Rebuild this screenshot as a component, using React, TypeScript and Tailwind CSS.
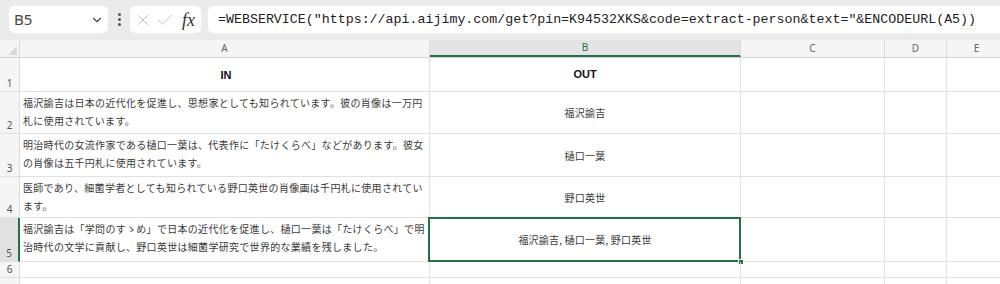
import React from "react";
import { ChevronDown, X, Check } from "lucide-react";

const jp = { fontFamily: '"Noto Sans CJK JP", "Noto Sans", sans-serif' };
const ui = { fontFamily: '"Noto Sans", "Liberation Sans", sans-serif' };

const rows: { h: number; a: string[]; b: string; bold?: boolean; label?: boolean }[] = [
  { h: 34, a: [], b: "OUT", bold: true },
  {
    h: 42,
    a: [
      "福沢諭吉は日本の近代化を促進し、思想家としても知られています。彼の肖像は一万円",
      "札に使用されています。",
    ],
    b: "福沢諭吉",
  },
  {
    h: 43,
    a: [
      "明治時代の女流作家である樋口一葉は、代表作に「たけくらべ」などがあります。彼女",
      "の肖像は五千円札に使用されています。",
    ],
    b: "樋口一葉",
  },
  {
    h: 41,
    a: [
      "医師であり、細菌学者としても知られている野口英世の肖像画は千円札に使用されてい",
      "ます。",
    ],
    b: "野口英世",
  },
  {
    h: 44,
    a: [
      "福沢諭吉は「学問のすゝめ」で日本の近代化を促進し、樋口一葉は「たけくらべ」で明",
      "治時代の文学に貢献し、野口英世は細菌学研究で世界的な業績を残しました。",
    ],
    b: "福沢諭吉, 樋口一葉, 野口英世",
  },
  { h: 16, a: [], b: "" },
  { h: 20, a: [], b: "", label: false },
];

const cols = "grid grid-cols-[20px_410px_311px_144px_62px_1fr]";

export default function App() {
  return (
    <div className="w-[1000px] h-[284px] overflow-hidden bg-white" style={ui}>
      {/* toolbar */}
      <div className="h-[40px] bg-[#ebebeb] flex items-start pt-[6px] pl-[9px] gap-0">
        <div className="w-[99px] h-[27px] bg-white rounded-[5px] flex items-center justify-between pl-[5px] pr-[4px]">
          <span className="text-[15px] text-[#444]">B5</span>
          <ChevronDown className="w-[14px] h-[14px] text-[#444]" strokeWidth={2} />
        </div>
        <div className="w-[22px] h-[27px] flex flex-col items-center justify-center gap-[2px]">
          <span className="w-[3px] h-[3px] rounded-full bg-[#555]" />
          <span className="w-[3px] h-[3px] rounded-full bg-[#555]" />
          <span className="w-[3px] h-[3px] rounded-full bg-[#555]" />
        </div>
        <div className="w-[71px] h-[27px] bg-white rounded-[5px] flex items-center pl-[3px] gap-[2px]">
          <X className="w-[20px] h-[20px] text-[#c2c2c2]" strokeWidth={1.1} />
          <Check className="w-[20px] h-[20px] text-[#c2c2c2]" strokeWidth={1.1} />
          <span
            className="text-[18px] italic text-[#333] ml-[5px] leading-none"
            style={{ fontFamily: '"Liberation Serif", serif' }}
          >
            fx
          </span>
        </div>
        <div className="ml-[7px] flex-1 h-[27px] bg-white rounded-l-[5px] flex items-center pl-[10px]">
          <span
            className="text-[13.3px] text-[#222] whitespace-nowrap"
            style={{ fontFamily: '"Liberation Mono", monospace' }}
          >
            =WEBSERVICE("https://api.aijimy.com/get?pin=K94532XKS&amp;code=extract-person&amp;text="&amp;ENCODEURL(A5))
          </span>
        </div>
      </div>

      {/* column headers */}
      <div className={`${cols} h-[18px] bg-[#f5f5f5] border-b border-[#d4d4d4] text-[10px] text-[#666]`}>
        <div className="relative border-r border-[#dcdcdc]">
          <svg className="absolute right-[2px] bottom-[2px]" width="9" height="9" viewBox="0 0 9 9">
            <polygon points="9,0 9,9 0,9" fill="#d8d8d8" />
          </svg>
        </div>
        <div className="flex items-center justify-center border-r border-[#dcdcdc]">A</div>
        <div className="flex items-center justify-center bg-[#e4e4e4] border-b-2 border-[#217346] text-[#217346] border-r border-r-[#dcdcdc]">
          B
        </div>
        <div className="flex items-center justify-center border-r border-[#dcdcdc]">C</div>
        <div className="flex items-center justify-center border-r border-[#dcdcdc]">D</div>
        <div className="flex items-center justify-center pl-[6px]">E</div>
      </div>

      {/* rows */}
      {rows.map((r, i) => {
        const selected = i === 4;
        return (
          <div key={i} className={cols} style={{ height: r.h }}>
            <div
              className={`flex items-end justify-center pb-[2px] text-[10px] leading-[12px] text-[#555] border-b border-[#e1e1e1] ${
                selected ? "bg-[#e1e1e1] border-r-2 border-r-[#217346]" : "bg-[#f5f5f5] border-r border-r-[#dcdcdc]"
              }`}
            >
              {r.label === false ? "" : i + 1}
            </div>
            <div
              className={`border-r border-b border-[#e1e1e1] text-[#3a3a3a] pl-[3px] pt-[2px] ${
                i === 0 ? "flex items-center justify-center" : ""
              }`}
              style={jp}
            >
              {i === 0 ? (
                <span className="text-[11px] font-bold text-[#111]" style={{ fontFamily: '"Liberation Sans", sans-serif' }}>
                  IN
                </span>
              ) : (
                r.a.map((line, j) => (
                  <div key={j} className="text-[10px] tracking-[0.3px] leading-[18px] whitespace-nowrap">
                    {line}
                  </div>
                ))
              )}
            </div>
            <div
              className="relative border-r border-b border-[#e1e1e1] flex items-center justify-center text-[#3a3a3a]"
              style={jp}
            >
              {r.bold ? (
                <span className="text-[11px] font-bold text-[#111]" style={{ fontFamily: '"Liberation Sans", sans-serif' }}>
                  {r.b}
                </span>
              ) : (
                <span className="text-[10px] tracking-[0.2px]">{r.b}</span>
              )}
              {selected && (
                <>
                  <div className="absolute left-[-2px] top-[-1px] right-[-1px] bottom-[-1px] border-2 border-[#217346]" />
                  <div className="absolute right-[-4px] bottom-[-4px] w-[6px] h-[6px] bg-[#217346] border border-white" />
                </>
              )}
            </div>
            <div className="border-r border-b border-[#e1e1e1]" />
            <div className="border-r border-b border-[#e1e1e1]" />
            <div className="border-b border-[#e1e1e1]" />
          </div>
        );
      })}
    </div>
  );
}
